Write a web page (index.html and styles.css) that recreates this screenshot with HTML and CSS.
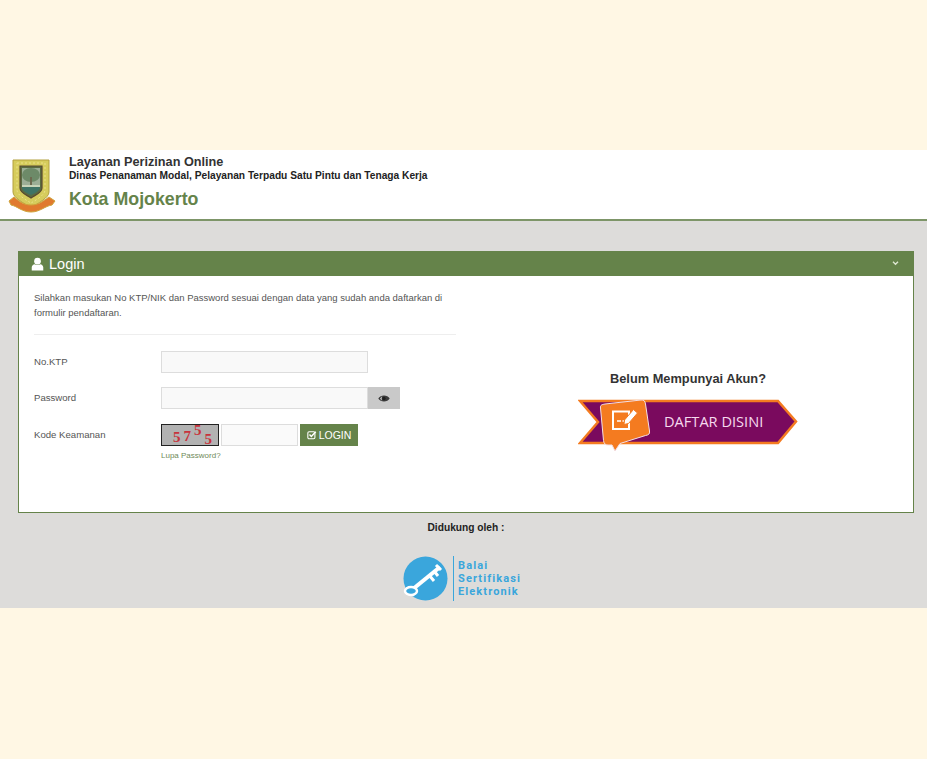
FILE: index.html
```html
<!DOCTYPE html>
<html lang="en">
<head>
    <meta charset="UTF-8">
    <meta name="viewport" content="width=device-width, initial-scale=1.0">
    <title>Layanan Perizinan Online</title>
    <link rel="stylesheet" href="styles.css">
</head>
<body>
    <div class="app">
        <header class="top">
            <svg class="crest" viewBox="0 0 48 54" width="48" height="54">
                <path d="M5 1H41V33C41 39 30 44 23 49C16 44 5 39 5 33Z" fill="#d6cc5c" stroke="#b3a03e"/>
                <path d="M9 4H37V31C37 36 28 41 23 44C18 41 9 36 9 31Z" fill="none" stroke="#ece08a" stroke-dasharray="2 2"/>
                <path d="M12 7H34V29C34 34 27 36 23 39C19 36 12 34 12 29Z" fill="#5a6b42" stroke="#5b4a30" stroke-width="1.200"/>
                <path d="M14 9H32V26H14Z" fill="#9cae96"/>
                <ellipse cx="23" cy="16" rx="9" ry="7" fill="#6d8a68"/>
                <path d="M22 18H24V27H22Z" fill="#6e6a50"/>
                <path d="M14 26H32V28H14Z" fill="#c7d3b8"/>
                <path d="M14 28H32C32 32 27 34 23 36C19 34 14 32 14 28Z" fill="#3f7466"/>
                <path d="M1 42L6 38C12 43 16 46 23 46C30 46 34 43 41 38L47 42L44 46C37 47 32 53 23 53C14 53 9 47 3 46Z" fill="#e07a2e" stroke="#cfa43c"/>
            </svg>
            <div class="top-text">
                <div class="top-title">Layanan Perizinan Online</div>
                <div class="top-sub">Dinas Penanaman Modal, Pelayanan Terpadu Satu Pintu dan Tenaga Kerja</div>
                <div class="top-city">Kota Mojokerto</div>
            </div>
        </header>

        <main class="content">
            <section class="panel">
                <div class="panel-head">
                    <h2>
                        <svg viewBox="0 0 14 14" width="13" height="14"><circle cx="7" cy="4" r="3.6" fill="#fff"/><path d="M0.8 14V10.6C0.8 8.6 2.4 7.4 4 7.2C5.8 8.4 8.2 8.4 10 7.2C11.6 7.4 13.2 8.6 13.2 10.6V14Z" fill="#fff"/></svg>
                        Login
                    </h2>
                    <svg class="chevron" viewBox="0 0 8 6" width="7" height="5"><path d="M1 1L4 4L7 1" fill="none" stroke="#dfe8d4" stroke-width="1.6"/></svg>
                </div>
                <div class="panel-body">
                    <div class="left">
                        <p class="intro">Silahkan masukan No KTP/NIK dan Password sesuai dengan data yang sudah anda daftarkan di formulir pendaftaran.</p>
                        <hr>
                        <form class="form">
                            <div class="row">
                                <label>No.KTP</label>
                                <input class="field" type="text">
                            </div>
                            <div class="row">
                                <label>Password</label>
                                <input class="field" type="password">
                                <button class="eye" type="button">
                                    <svg viewBox="0 0 12 9" width="12" height="9"><path d="M0.3 4.500C2.500 0.600 9.500 0.600 11.700 4.500C9.500 8.400 2.500 8.400 0.300 4.500Z" fill="#3a3a3a"/><path d="M2 4.500C3 3 4 2.400 4.300 2.400C3.500 3.500 3.500 5.500 4.300 6.600C3.500 6.300 2.600 5.400 2 4.500Z" fill="#c9c9c9"/><circle cx="6" cy="4.500" r="1.700" fill="#1f1f1f"/></svg>
                                </button>
                            </div>
                            <div class="row row-code">
                                <label>Kode Keamanan</label>
                                <div class="captcha"><span>5</span><span class="mid">7</span><span class="up">5</span><span class="down">5</span></div>
                                <input class="field code" type="text">
                                <button class="login" type="button">
                                    <svg viewBox="0 0 12 12" width="10" height="10"><rect x="1" y="2" width="8.500" height="8.500" rx="1.500" fill="none" stroke="#fff" stroke-width="1.300"/><path d="M3 5.500L5.200 7.700L10.500 2" fill="none" stroke="#fff" stroke-width="1.800"/></svg>
                                    LOGIN
                                </button>
                            </div>
                            <a class="forgot" href="#">Lupa Password?</a>
                        </form>
                    </div>
                    <div class="right">
                        <h3>Belum Mempunyai Akun?</h3>
                        <a class="daftar" href="#">
                            <svg class="ribbon" viewBox="0 0 220 54" width="220" height="54">
                                <path d="M2 2H200L218 22.500L200 44H2L20 23Z" fill="#7a0a5e" stroke="#f47b20" stroke-width="2.500"/>
                                <path d="M27 5L63 1C66 .7 67 2 67.500 5L71.500 32C72 35 70.500 36 67.500 36.500L42 44.500L37 52L34 46L30 46C27 46 26 44.500 25.500 41.500L22.500 9C22 6 24 5.500 27 5Z" fill="#f47b20" stroke="#f3dfe6"/>
                                <path d="M35 12.500H51V30H35Z" fill="none" stroke="#fff" stroke-width="2"/>
                                <path d="M39 22H43M44.500 22H46" stroke="#fff" stroke-width="1.500"/>
                                <path d="M46.500 21L55.500 10.500L59.500 14L50.500 24.500L46 25.500Z" fill="#fff" stroke="#f47b20"/>
                            </svg>
                            <span>DAFTAR DISINI</span>
                        </a>
                    </div>
                </div>
            </section>

            <div class="support">
                <strong>Didukung oleh :</strong>
                <div class="bse">
                    <svg viewBox="0 0 45 45" width="45" height="45">
                        <circle cx="22.500" cy="22.500" r="22" fill="#3aa6dc"/>
                        <path d="M3 31C2 36 7 41 12 40C9 38 6 35 3 31Z" fill="#fff"/>
                        <path d="M10 33L37 11" fill="none" stroke="#fff" stroke-width="4"/>
                        <path d="M26 19L31 25M31 15L35 20M33 9L38 14" fill="none" stroke="#fff" stroke-width="3"/>
                        <ellipse cx="8" cy="35" rx="6" ry="4" fill="#3aa6dc" stroke="#fff" stroke-width="2.500"/>
                    </svg>
                    <div class="bse-text">Balai<br>Sertifikasi<br>Elektronik</div>
                </div>
            </div>
        </main>
    </div>
</body>
</html>
```

FILE: styles.css
```css
body {
    margin: 0;
    min-height: 758px;
    display: flex;
    flex-direction: column;
    justify-content: center;
    background-color: #fff7e4;
    font-family: "Liberation Sans", Arial, sans-serif;
    color: #333;
}
.app {
    height: 458px;
    display: flex;
    flex-direction: column;
}
.top {
    height: 69px;
    display: flex;
    background-color: #fff;
    border-bottom: 2px solid #7d9568;
}
.crest {
    margin: 9px 0 0 8px;
}
.top-text {
    margin-left: 13px;
    padding-top: 5px;
}
.top-title {
    font-size: 12.700px;
    font-weight: bold;
    line-height: 14px;
    color: #333;
}
.top-sub {
    font-size: 10.200px;
    font-weight: bold;
    line-height: 14px;
    color: #222;
}
.top-city {
    margin-top: 5px;
    font-size: 17.800px;
    font-weight: bold;
    line-height: 22px;
    color: #65834a;
}
.content {
    flex: 1;
    background-color: #dddcda;
    padding: 30px 13px 0 18px;
}
.panel {
    height: 262px;
    box-sizing: border-box;
    display: flex;
    flex-direction: column;
    background-color: #fff;
    border: 1px solid #65834a;
    border-top: 0;
}
.panel-head {
    height: 25px;
    flex: none;
    display: flex;
    align-items: center;
    justify-content: space-between;
    padding: 0 14px 0 12px;
    background-color: #65834a;
}
.panel-head h2 {
    margin: 0;
    display: flex;
    align-items: center;
    gap: 5px;
    font-size: 14.500px;
    font-weight: normal;
    color: #fff;
}
.panel-body {
    display: flex;
    gap: 22px;
    padding: 14px 15px 0;
}
.left {
    width: 422px;
    flex: none;
}
.intro {
    margin: 0;
    font-size: 9.500px;
    line-height: 15px;
    color: #555;
}
hr {
    margin: 14px 0 16px;
    border: 0;
    border-top: 1px solid #eeeeee;
}
.row {
    display: flex;
    align-items: center;
    height: 22px;
    margin-bottom: 14px;
}
.row-code {
    margin-top: 15px;
}
.row label {
    width: 127px;
    flex: none;
    padding-bottom: 2px;
    font-size: 9.600px;
    color: #555;
}
.field {
    width: 207px;
    height: 22px;
    box-sizing: border-box;
    margin: 0;
    padding: 0 6px;
    background-color: #f9f9f9;
    border: 1px solid #ddd;
}
.field.code {
    width: 77px;
    margin: 0 2px;
    background-color: #fafafa;
}
.eye {
    width: 32px;
    height: 22px;
    padding: 0;
    border: 0;
    background-color: #c9c9c9;
}
.captcha {
    width: 58px;
    height: 22px;
    box-sizing: border-box;
    display: flex;
    gap: 3px;
    padding: 5px 0 0 11px;
    background-color: #b2b2b2;
    border: 1px solid #222;
    font-family: "Liberation Serif", serif;
    font-size: 15px;
    font-weight: bold;
    line-height: 14px;
    color: #c8323c;
}
.captcha .mid {
    margin-top: -1px;
}
.captcha .up {
    margin-top: -7px;
}
.captcha .down {
    margin-top: 2px;
}
.login {
    width: 58px;
    height: 22px;
    padding: 0;
    display: flex;
    align-items: center;
    justify-content: center;
    gap: 2px;
    border: 0;
    background-color: #65834a;
    font-family: "Liberation Sans", Arial, sans-serif;
    font-size: 10.500px;
    color: #fff;
}
.forgot {
    display: block;
    margin: -10px 0 0 127px;
    font-size: 8px;
    line-height: 12px;
    color: #6f8a5a;
    text-decoration: none;
}
.right {
    flex: 1;
    display: flex;
    flex-direction: column;
    align-items: center;
    padding-top: 81px;
}
.right h3 {
    margin: 0 0 13px;
    font-size: 12.800px;
    line-height: 15px;
    color: #333;
}
.daftar {
    position: relative;
    display: block;
    width: 220px;
    height: 54px;
    text-decoration: none;
}
.ribbon {
    display: block;
}
.daftar span {
    position: absolute;
    left: 86px;
    top: 12px;
    font-family: "Open Sans", sans-serif;
    font-size: 14.600px;
    line-height: 20px;
    color: #f6d9ee;
}
.support {
    display: flex;
    flex-direction: column;
    align-items: center;
    padding-top: 8px;
}
.support strong {
    font-size: 10.200px;
    line-height: 13px;
    color: #222;
}
.bse {
    margin: 22px 8px 0 0;
    display: flex;
    align-items: stretch;
}
.bse-text {
    margin-left: 5px;
    padding: 3px 0 0 4px;
    border-left: 1px solid #3aa6dc;
    font-family: Roboto, sans-serif;
    font-size: 11px;
    font-weight: bold;
    line-height: 13px;
    letter-spacing: 1.1px;
    color: #3aa6dc;
}
```
